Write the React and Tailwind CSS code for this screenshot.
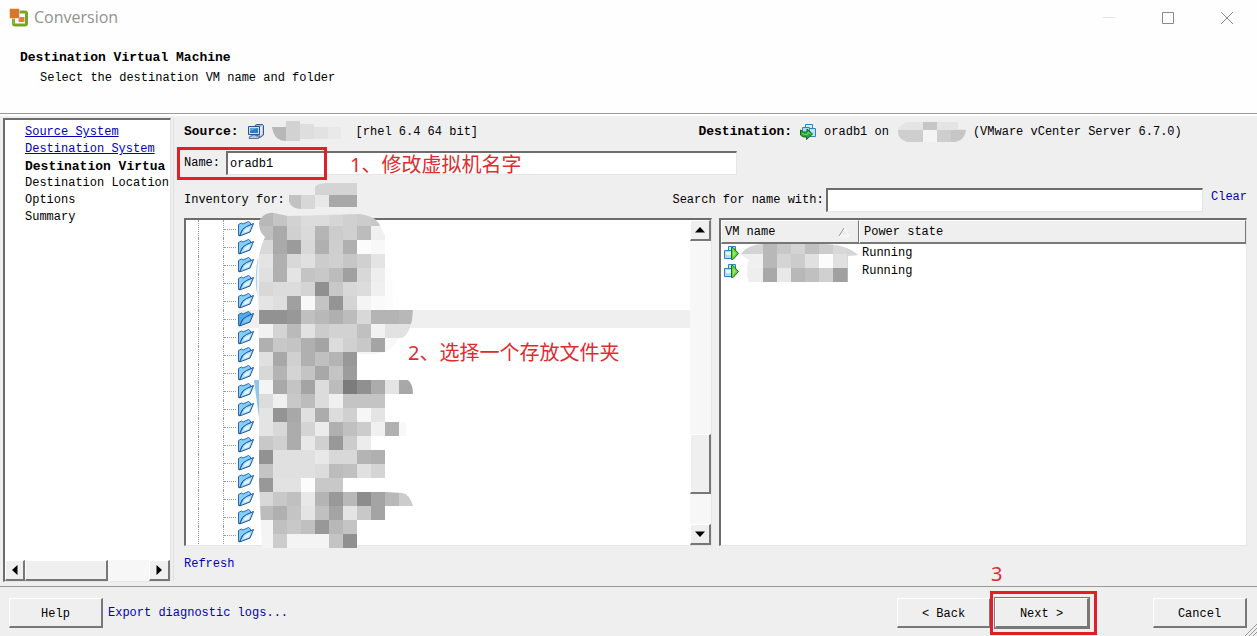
import { useState } from 'react'

const STEPS = [
  { label: 'Source System', done: true },
  { label: 'Destination System', done: true },
  { label: 'Destination Virtua', current: true },
  { label: 'Destination Location' },
  { label: 'Options' },
  { label: 'Summary' },
]

const FOLDER_COUNT = 18
const VMS = ['Running', 'Running']

// grey level of each 14px tile, '--' leaves it empty
const TREE_MASK = [
  'b8 c4 d2 dc dc d6 d0 cc c8 -- --',
  'bf aa d0 da b5 cc d0 bc f0 -- --',
  'd8 aa 9b d8 b0 ce b0 fc f8 -- --',
  'e4 b0 d8 e0 cc d0 c6 d0 e4 -- --',
  'e0 b0 e4 c4 c8 bc a0 d8 ee fc --',
  'd8 dc dc d4 90 c8 d8 dc f0 fc --',
  'e4 de a0 f8 c4 94 d4 f4 fa fc --',
  '92 92 98 c0 b8 b0 bc d8 b4 b4 b8',
  'f2 d4 ba e2 cc d2 d2 c0 f2 e2 e2',
  'b0 c8 c4 b0 a4 dc d0 c8 a4 f8 --',
  'e0 a8 d0 b0 c0 b4 98 -- -- -- --',
  'd8 b4 d4 c4 a8 c4 9c -- -- -- --',
  'f4 a8 c4 a4 dc bc 7c 90 ac e4 a8',
  'dc f0 c8 bc dc f0 c4 c4 c4 -- --',
  'e4 94 a8 e0 ac dc d0 f6 e4 -- --',
  'e4 d8 ac d4 ec b0 c0 cc f0 b0 f8',
  'c8 d0 ac e8 d0 98 cc ec -- -- --',
  '92 e0 e0 e0 e8 d8 d8 b4 b0 -- --',
  'c4 e0 e0 e0 dc bc c0 e0 d4 -- --',
  '98 e2 e2 fc c8 c8 -- -- -- dc --',
  'd8 c8 c0 e8 b4 98 b8 8c a4 b8 cc',
  'bc b0 c4 e4 c0 a4 e4 c8 a4 -- --',
  'f4 c0 c8 c0 98 b8 c4 -- -- -- --',
  'f4 cc f4 f4 f4 c4 90 -- -- -- --',
]

function Tiles({ rows, tile = 14, x = 0, y = 0 }) {
  return rows.map((row, r) =>
    row.split(' ').map((v, c) =>
      v === '--' ? null : (
        <rect
          key={`${r}-${c}`}
          x={x + c * tile}
          y={y + r * tile}
          width={tile}
          height={tile}
          fill={`#${v}${v}${v}`}
          shapeRendering="crispEdges"
        />
      )
    )
  )
}

function TreeMask() {
  return (
    <svg width="160" height="336" className="absolute left-[68px] -top-2 pointer-events-none" aria-hidden="true">
      <clipPath id="tree-mask">
        <path d="M5 11C6 4 14 0 20 1L34 4L106 2Q123 4 127 16L131 24Q141 60 139 98H159L158 108Q154 126 146 126L133 140L120 142H103V168H154Q159 172 159 182H131V210H152V224H131V280L149 281Q156 283 159 294H131V308H103V336H8L5 270V140L3 70Q2 44 11 25Q5 20 5 11Z" />
      </clipPath>
      <path d="M4 45C1 60 1 75 4 85Z" fill="#a9cfec" />
      <path d="M0 168H5V206Z" fill="#8fc6ea" />
      <g clipPath="url(#tree-mask)">
        <rect width="131" height="154" fill="#f4f4f4" />
        <Tiles rows={TREE_MASK} x={5} />
      </g>
    </svg>
  )
}

function AppLogo() {
  return (
    <svg width="20" height="20" viewBox="0 0 20 20" aria-hidden="true">
      <rect x="4.5" y="4" width="13" height="13" rx="1.5" fill="#fff" stroke="#73a820" strokeWidth="3" />
      <rect x="9.5" y="9" width="6" height="5" fill="#df8138" />
      <rect x="0.5" y="0.5" width="10" height="10" rx="1" fill="#d8762b" stroke="#fff" strokeWidth="0.5" />
      <path d="M4.5 11V16" stroke="#92c746" />
    </svg>
  )
}

function ComputerIcon() {
  return (
    <svg width="17" height="16" viewBox="0 0 17 16" aria-hidden="true">
      <path d="M8 1.5L10 .5H15.5L16.5 1.5V11L13 13.5H10V3H8Z" fill="#9db8d8" stroke="#35588c" />
      <path d="M13 3L15.5 1.5V10L13 12Z" fill="#dce9f5" />
      <path d="M1.5 2.5H12.5V10.5H1.5Z" fill="#c9e4f6" stroke="#2a5191" />
      <path d="M3 4H11V9H3Z" fill="#2f79c6" />
      <path d="M3 4H11L3 7Z" fill="#5aa3df" />
      <path d="M5 11H9V12H12.5L11.5 14.5H2L3 12H5Z" fill="#b9c9dc" stroke="#3d608f" strokeWidth="0.8" />
    </svg>
  )
}

function ServerIcon() {
  return (
    <svg width="16" height="16" viewBox="0 0 16 16" aria-hidden="true">
      <path d="M5.5 .5H12.5V8.5H5.5Z" fill="#d3f1fa" stroke="#2f83bb" />
      <path d="M8.5 4.5H15.5V12.5H8.5Z" fill="#b5e6f3" stroke="#2f83bb" />
      <path d="M2.5 3.5H9.5V9.5H2.5Z" fill="#a5dfec" stroke="#2f83bb" />
      <path d="M.5 6V11Q2 13.5 6.5 13V15.5L12.5 10L7 5V8Q3 9 .5 6Z" fill="#2ba23c" stroke="#136024" />
      <path d="M2 9.5Q4.5 11 8 10.2V8L10.5 10" fill="none" stroke="#77db67" />
    </svg>
  )
}

function VmIcon() {
  return (
    <svg width="16" height="16" viewBox="0 0 16 16" aria-hidden="true">
      <path d="M4.5 1.5H11.5V9.5H4.5Z" fill="#b8ecf5" stroke="#2f83bb" />
      <path d="M.5 5.5H8.5V13.5H.5Z" fill="#a7e2ee" stroke="#2f83bb" />
      <path d="M2 7H7V10H2Z" fill="#e0f8fb" />
      <path d="M7.5 2.5H9L14.5 8.5L9 14.5H7.5Z" fill="#64cf38" stroke="#18751f" />
      <path d="M9 5V12L12 8.5Z" fill="#98e86a" />
    </svg>
  )
}

function FolderIcon({ selected }) {
  return (
    <svg width="16" height="16" viewBox="0 0 16 16" className="shrink-0" aria-hidden="true">
      <path d="M.5 14.5V3.5L3.5 2L5 3L10.5 .5L12.5 2V5L4 9L2 14.5Z" fill={selected ? '#4faae8' : '#85cef8'} stroke="#2a6cb3" />
      <path d="M1.5 15L5 8L8.5 5.5L15.5 2.5L12 11Z" fill={selected ? '#6eb9ee' : '#a9dcfb'} stroke="#174f96" />
      <path d="M5 12L7 8.5L12.5 5.5L10.5 10Z" fill={selected ? '#87c8f3' : '#e2f5ff'} />
    </svg>
  )
}

function Triangle({ className }) {
  return (
    <svg width="10" height="6" viewBox="0 0 10 6" className={className} aria-hidden="true">
      <path d="M5 0L10 5.5H0Z" fill="#000" />
    </svg>
  )
}

const raised = 'border-t border-l border-r-2 border-b-2 border-t-white border-l-white border-r-[#777] border-b-[#777] bg-[#f0eff0]'
const headCell = 'border-t border-l border-r border-b-2 border-t-white border-l-white border-r-[#777] border-b-[#777] bg-[#f0eff0]'
const sunken = 'border-t-2 border-l-2 border-r border-b border-t-[#6d6d6d] border-l-[#6d6d6d] border-r-[#e5e5e5] border-b-[#e5e5e5] bg-white'
const track = 'bg-[#f8f7f8]'
const note = "absolute whitespace-nowrap pointer-events-none font-['Noto_Sans','Noto_Sans_CJK_SC',sans-serif] text-xl leading-6 text-[#df2b30]"

function WizardButton({ children, primary }) {
  return (
    <button type="button" className={`h-[30px] w-[94px] pt-1 ${raised} ${primary ? 'outline outline-[#777]' : ''}`}>
      {children}
    </button>
  )
}

function Sidebar() {
  return (
    <nav className={`w-[168px] shrink-0 flex flex-col ${sunken}`} aria-label="Steps">
      <ol className="flex-1 overflow-hidden whitespace-nowrap pl-5 pt-1 leading-[17px]">
        {STEPS.map((s) => (
          <li key={s.label} className={s.current ? 'font-bold text-[13px] leading-[17px]' : ''}>
            {s.done ? <a href="#step" className="text-[#0000b8] underline">{s.label}</a> : s.label}
          </li>
        ))}
      </ol>
      <div className={`flex h-[21px] ${track}`}>
        <button type="button" aria-label="Scroll left" className={`flex w-5 items-center justify-center ${raised}`}>
          <Triangle className="-rotate-90" />
        </button>
        <div className={`w-1/2 ${raised}`} />
        <button type="button" aria-label="Scroll right" className={`ml-auto flex w-[21px] items-center justify-center ${raised}`}>
          <Triangle className="rotate-90" />
        </button>
      </div>
    </nav>
  )
}

function InventoryTree() {
  return (
    <div className={`relative flex min-w-0 ${sunken}`}>
      <ul className="min-w-0 flex-1 overflow-hidden">
        {Array.from({ length: FOLDER_COUNT }, (_, i) => (
          <li key={i} className="flex h-[18px] items-center pl-3">
            <span className="h-full w-[25px] shrink-0 border-l border-dotted border-[#999]" />
            <span className="flex h-full w-[15px] shrink-0 items-center border-l border-dotted border-[#999]">
              <span className="w-3 border-t border-dotted border-[#999]" />
            </span>
            <span className={`flex h-full flex-1 items-center ${i === 5 ? 'bg-[#efeff0]' : ''}`}>
              <FolderIcon selected={i === 5} />
            </span>
          </li>
        ))}
      </ul>
      <div className={`flex w-[21px] shrink-0 flex-col ${track}`}>
        <button type="button" aria-label="Scroll up" className={`flex h-[21px] items-center justify-center ${raised}`}>
          <Triangle />
        </button>
        <div className="grow-[193]" />
        <div className={`h-[60px] ${raised}`} />
        <div className="grow-[30]" />
        <button type="button" aria-label="Scroll down" className={`flex h-[21px] items-center justify-center ${raised}`}>
          <Triangle className="rotate-180" />
        </button>
      </div>
      <TreeMask />
      <p className={`${note} left-[222px] top-[121px]`}>2、选择一个存放文件夹</p>
    </div>
  )
}

function VmTable() {
  return (
    <div className={`relative min-w-0 ${sunken}`}>
      <table className="w-full table-fixed border-separate border-spacing-0 text-left">
        <thead>
          <tr className="h-6">
            <th className={`w-[138px] pl-[3px] font-normal ${headCell}`}>
              <span className="flex items-center justify-between pr-2">
                VM name
                <svg width="12" height="10" viewBox="0 0 12 10" aria-hidden="true">
                  <path d="M6 1L11 9H1" fill="none" stroke="#fff" />
                  <path d="M1 9L6 1" stroke="#999" />
                </svg>
              </span>
            </th>
            <th className={`pl-1 font-normal ${headCell}`}>Power state</th>
          </tr>
        </thead>
        <tbody>
          {VMS.map((state, i) => (
            <tr key={i} className="h-[18px]">
              <td className="p-0 pl-[3px]"><VmIcon /></td>
              <td className="p-0 pl-[3px]">{state}</td>
            </tr>
          ))}
        </tbody>
      </table>
      <svg width="120" height="40" className="absolute left-5 top-6 pointer-events-none" aria-hidden="true">
        <clipPath id="vm-mask"><path d="M0 10Q8 0 22 0H80Q105 0 117 11L107 12V38H8Q4 28 8 16Z" /></clipPath>
        <g clipPath="url(#vm-mask)">
          <rect width="120" height="40" fill="#e8e8e8" />
          <Tiles tile={14} x={-6} y={-4} rows={[
            'd2 d4 b8 c8 d4 c0 cc d8 d4',
            'f0 f0 b8 d4 cc e0 fc e0 d8',
            'f0 ee a8 e8 b8 c0 d0 a0 b4',
          ]} />
        </g>
      </svg>
    </div>
  )
}

export default function App() {
  const [name, setName] = useState('oradb1')
  const [search, setSearch] = useState('')

  return (
    <div className="flex h-screen flex-col overflow-hidden bg-[#f0eff0] font-['Liberation_Mono',monospace] text-xs text-black">
      {/* title bar */}
      <header className="border-b border-[#999] bg-[#fefefe] pb-[25px]">
        <div className="flex h-9 items-center pl-[9px] pr-6">
          <AppLogo />
          <span className="ml-[5px] flex-1 pb-0.5 font-['Open_Sans',sans-serif] text-base text-[#929292]">Conversion</span>
          <div className="flex items-center gap-[47px]">
            <button type="button" aria-label="Minimize">
              <svg width="12" height="12"><path d="M0 5.5H12" stroke="#e4e4e4" /></svg>
            </button>
            <button type="button" aria-label="Maximize">
              <svg width="12" height="12"><path d="M.5 .5H11.5V11.5H.5Z" fill="none" stroke="#888" /></svg>
            </button>
            <button type="button" aria-label="Close">
              <svg width="12" height="12"><path d="M0 0L12 12M12 0L0 12" stroke="#888" /></svg>
            </button>
          </div>
        </div>
        <div className="pl-5 pt-3 leading-5">
          <h1 className="text-[13px] font-bold leading-5">Destination Virtual Machine</h1>
          <p className="pl-5">Select the destination VM name and folder</p>
        </div>
      </header>

      <div className="flex min-h-0 flex-1 border-t-2 border-t-white pt-0.5 pb-1 pl-[3px]">
        <Sidebar />
        <main className="ml-0.5 flex min-w-0 flex-1 flex-col border-l border-[#e0e0e0] pl-[10px] pr-[10px]">
          {/* source and destination */}
          <div className="grid h-[33px] shrink-0 grid-cols-[514fr_548fr] items-center pb-1.5 whitespace-nowrap">
            <div className="flex items-center">
              <b className="text-[13px]">Source:</b>
              <span className="ml-2"><ComputerIcon /></span>
              <svg width="70" height="22" className="ml-2" aria-hidden="true">
                <path d="M0 6H14V20Q2 20 0 6Z" fill="#b8b8b8" />
                <path d="M14 0H28V20H14Z" fill="#d2d2d2" />
                <path d="M28 3H42V18H28Z" fill="#dedede" />
                <path d="M42 6H56V18H42Z" fill="#e2e2e2" />
                <path d="M56 6H69V18H56Z" fill="#e9e9e9" />
              </svg>
              <span className="ml-3.5">[rhel 6.4 64 bit]</span>
            </div>
            <div className="flex items-center">
              <b className="text-[13px]">Destination:</b>
              <span className="ml-2"><ServerIcon /></span>
              <span className="ml-2">oradb1 on</span>
              <svg width="70" height="20" className="ml-2" aria-hidden="true">
                <clipPath id="dest-mask"><path d="M9 0H61V7H69Q68 19 57 20H10Q-2 16 2 5Z" /></clipPath>
                <g clipPath="url(#dest-mask)">
                  <rect width="70" height="20" fill="#e4e4e4" />
                  <path d="M0 8H26V20H0ZM40 8H54V20H40Z" fill="#cecece" />
                  <path d="M26 8H40V20H26Z" fill="#f4f4f4" />
                  <path d="M26 0H40V8H26ZM54 8H70V20H54Z" fill="#c6c6c6" />
                </g>
              </svg>
              <span className="ml-1.5">(VMware vCenter Server 6.7.0)</span>
            </div>
          </div>

          <div className="relative flex h-6 w-[52%] shrink-0 items-center">
            <label htmlFor="vm-name" className="w-[42px] shrink-0">Name:</label>
            <input
              id="vm-name"
              value={name}
              onChange={(e) => setName(e.target.value)}
              className={`h-6 min-w-0 flex-1 px-0.5 outline-none ${sunken}`}
            />
            <div className="pointer-events-none absolute -left-[7px] -top-1 h-[33px] w-[150px] border-[3px] border-[#df2027]" />
            <p className={`${note} left-[166px] top-0.5`}>1、修改虚拟机名字</p>
          </div>

          <div className="mt-3 grid h-[31px] shrink-0 grid-cols-[488fr_574fr] items-start whitespace-nowrap">
            <div className="flex items-center">
              <span className="pt-0.5">Inventory for:</span>
              <svg width="70" height="28" className="-mt-1 ml-1" aria-hidden="true">
                <path d="M0 12H12V26Q3 26 0 19Z" fill="#c2c2c2" />
                <path d="M12 12H26V26H12Z" fill="#d7d7d7" />
                <path d="M26 4Q28 0 40 0H68V12H26Z" fill="#d4d4d4" />
                <path d="M26 12H40V24H26Z" fill="#e8e8e8" />
                <path d="M40 12H68V24H40Z" fill="#a8a8a8" />
              </svg>
            </div>
            <div className="flex items-center pt-px">
              <label htmlFor="search" className="shrink-0">Search for name with:</label>
              <input
                id="search"
                value={search}
                onChange={(e) => setSearch(e.target.value)}
                className={`ml-0.5 h-6 min-w-0 flex-1 px-0.5 outline-none ${sunken}`}
              />
              <button type="button" onClick={() => setSearch('')} className="ml-2 pb-1.5 text-[#0000b8]">Clear</button>
            </div>
          </div>

          <div className="grid min-h-0 flex-1 grid-cols-2 gap-[7px]">
            <InventoryTree />
            <VmTable />
          </div>
          <div className="h-9 shrink-0 pt-2.5">
            <button type="button" className="text-[#0000b8]">Refresh</button>
          </div>
        </main>
      </div>

      <footer className="relative flex h-[50px] shrink-0 items-center border-t border-[#999] pl-[9px] pr-[10px] pt-0.5">
        <WizardButton>Help</WizardButton>
        <a href="#logs" className="ml-[5px] flex-1 text-[#0000b8]">Export diagnostic logs...</a>
        <WizardButton>&lt; Back</WizardButton>
        <div className="relative ml-1 mr-16">
          <WizardButton primary>Next &gt;</WizardButton>
          <div className="pointer-events-none absolute -left-[5px] -right-[8px] -top-[7px] -bottom-[7px] border-[3px] border-[#df2027]" />
          <p className={`${note} -left-1 -top-9`}>3</p>
        </div>
        <WizardButton>Cancel</WizardButton>
        <svg width="12" height="12" className="absolute bottom-0 right-0" aria-hidden="true">
          <path d="M0 12L12 0M4 12L12 4M8 12L12 8" stroke="#999" />
        </svg>
      </footer>
    </div>
  )
}
